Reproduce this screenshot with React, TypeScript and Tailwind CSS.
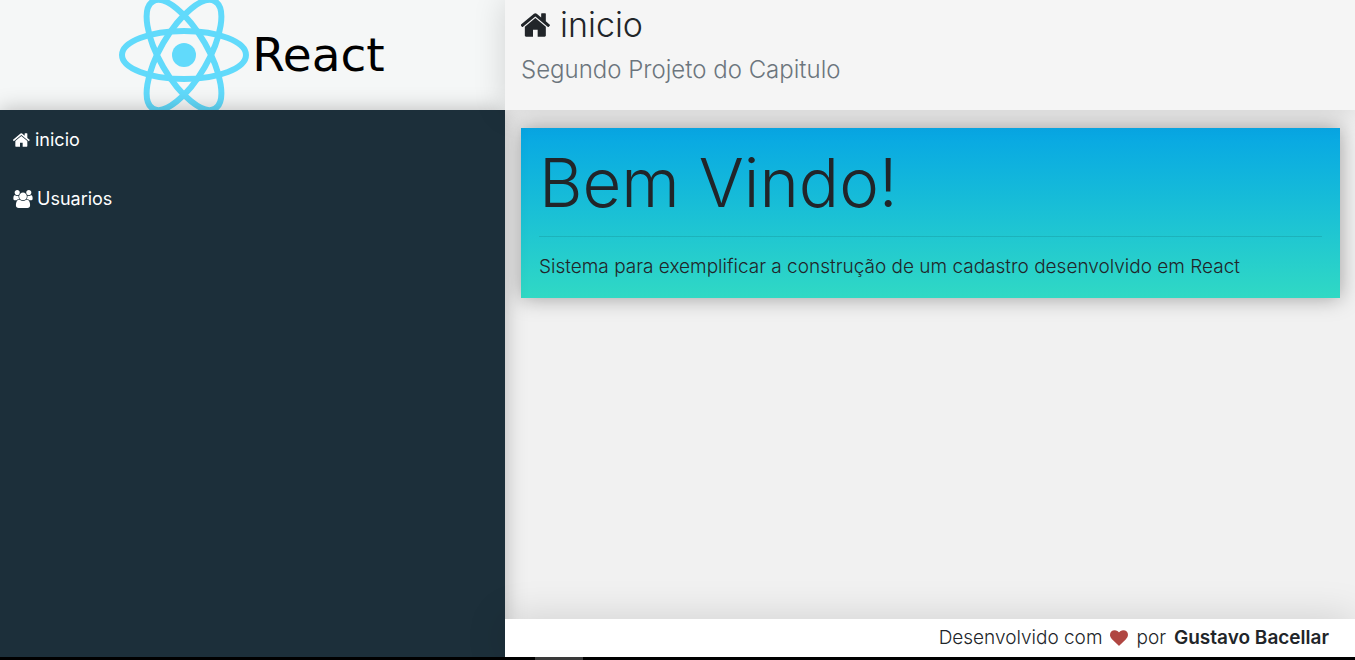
import React from "react";

type IconProps = { className?: string };

function HomeIcon({ className }: IconProps) {
  return (
    <svg viewBox="64 128 1664 1536" className={className} fill="currentColor" aria-hidden="true">
      <path d="M1408 992v480q0 26-19 45t-45 19h-384v-384h-256v384h-384q-26 0-45-19t-19-45v-480q0-1 .5-3t.5-3l575-474 575 474q1 2 1 6zm223-69l-62 74q-8 9-21 11h-3q-13 0-21-7l-692-577-692 577q-12 8-24 7-13-2-21-11l-62-74q-8-10-7-23.5t11-21.5l719-599q32-26 76-26t76 26l244 204v-195q0-14 9-23t23-9h192q14 0 23 9t9 23v408l219 182q10 8 11 21.5t-7 23.5z" />
    </svg>
  );
}

function UsersIcon({ className }: IconProps) {
  return (
    <svg viewBox="0 0 1920 1792" className={className} fill="currentColor" aria-hidden="true">
      <path d="M593 896q-162 5-265 128h-134q-82 0-138-40.5t-56-118.5q0-353 124-353 6 0 43.5 21t97.5 42.5 119 21.5q67 0 133-23-5 37-5 66 0 139 81 256zm1071 637q0 120-73 189.5t-194 69.5h-874q-121 0-194-69.5t-73-189.5q0-53 3.5-103.5t14-109 26.5-108.5 43-97.5 62-81 85.5-53.5 111.5-20q10 0 43 21.5t73 48 107 48 135 21.5 135-21.5 107-48 73-48 43-21.5q61 0 111.5 20t85.5 53.5 62 81 43 97.5 26.5 108.5 14 109 3.5 103.5zm-1024-1277q0 106-75 181t-181 75-181-75-75-181 75-181 181-75 181 75 75 181zm704 384q0 159-112.5 271.5t-271.5 112.5-271.5-112.5-112.5-271.5 112.5-271.5 271.5-112.5 271.5 112.5 112.5 271.5zm576 225q0 78-56 118.5t-138 40.5h-134q-103-123-265-128 81-117 81-256 0-29-5-66 66 23 133 23 59 0 119-21.5t97.5-42.5 43.5-21q124 0 124 353zm-128-609q0 106-75 181t-181 75-181-75-75-181 75-181 181-75 181 75 75 181z" />
    </svg>
  );
}

function HeartIcon({ className }: IconProps) {
  return (
    <svg viewBox="0 128 1792 1536" className={className} fill="currentColor" aria-hidden="true">
      <path d="M896 1664q-26 0-44-18l-624-602q-10-8-27.5-26t-55.5-65.5-68-97.5-53.5-121-23.5-138q0-220 127-344t351-124q62 0 126.5 21.5t120 58 95.5 68.5 76 68q36-36 76-68t95.5-68.5 120-58 126.5-21.5q224 0 351 124t127 344q0 221-229 450l-623 604q-18 18-44 18z" />
    </svg>
  );
}

function Logo() {
  return (
    <div className="flex h-[110px] items-center justify-center overflow-hidden bg-[#f5f7f7]">
      <a href="#inicio" className="flex items-center gap-0.5 pr-0.5 text-black">
        <svg viewBox="-66 -59 132 118" className="h-[118px] w-[132px]" fill="none" stroke="#61dafb" strokeWidth="6" aria-hidden="true">
          <circle r="12" fill="#61dafb" stroke="none" />
          <ellipse rx="62" ry="24" />
          <ellipse rx="62" ry="24" transform="rotate(60)" />
          <ellipse rx="62" ry="24" transform="rotate(120)" />
        </svg>
        <span className="font-['DejaVu_Sans',sans-serif] text-[47px] leading-[56px]">React</span>
      </a>
    </div>
  );
}

function Nav() {
  return (
    <aside className="z-10 grid row-span-2 bg-[#1c2f3a] shadow-[0_0_20px_rgba(0,0,0,0.25)]">
      <nav className="flex flex-col text-[18px] leading-[27px] text-white">
        <a href="#inicio" className="flex items-center gap-1 px-[13px] py-4">
          <HomeIcon className="h-4 w-[18px]" />
          inicio
        </a>
        <a href="#usuarios" className="flex items-center gap-1 px-[13px] py-4">
          <UsersIcon className="h-[18px] w-5" />
          Usuarios
        </a>
      </nav>
    </aside>
  );
}

function Header() {
  return (
    <header className="z-20 flex flex-col gap-2 bg-[#f5f5f5] px-4 pt-1.5 shadow-[0_0_30px_rgba(0,0,0,0.15)]">
      <h1 className="flex items-center gap-2 text-[34px] leading-[38px] font-light text-[#212529]">
        <HomeIcon className="h-7 w-[31px]" />
        inicio
      </h1>
      <p className="text-[24px] leading-9 font-light text-[#6c757d]">Segundo Projeto do Capitulo</p>
    </header>
  );
}

function Main() {
  return (
    <main className="bg-[#f1f1f1] py-[18px] pr-[15px] pl-4">
      <section className="bg-linear-to-b from-[#08a6e4] to-[#30d9c4] p-[18px] font-light text-[#212529] shadow-[0_0_20px_rgba(0,0,0,0.35)]">
        <h2 className="text-[67px] leading-[74px]">Bem Vindo!</h2>
        <hr className="my-4 border-black/10" />
        <p className="text-[19px] leading-[27px]">
          Sistema para exemplificar a construção de um cadastro desenvolvido em React
        </p>
      </section>
    </main>
  );
}

function Footer() {
  return (
    <footer className="z-20 flex items-center justify-end bg-white px-[26px] text-[19px] leading-[38px] font-light text-[#212529] shadow-[0_0_40px_rgba(0,0,0,0.15)]">
      <span>Desenvolvido com</span>
      <HeartIcon className="mx-2 h-4 w-[18px] text-[#b04642]" />
      <span>por</span>
      <strong className="ml-2 font-semibold">Gustavo Bacellar</strong>
    </footer>
  );
}

export default function App() {
  return (
    <div className="flex min-h-screen flex-col bg-black font-['Inter',sans-serif]">
      <div className="grid flex-1 grid-cols-[101fr_170fr] grid-rows-[110px_1fr_38px] overflow-hidden">
        <Logo />
        <Header />
        <Nav />
        <Main />
        <Footer />
      </div>
      <div className="grid h-[3px] grid-cols-[535fr_48fr_772fr]">
        <div className="col-start-2 bg-[#3a3a3a]" />
      </div>
    </div>
  );
}
